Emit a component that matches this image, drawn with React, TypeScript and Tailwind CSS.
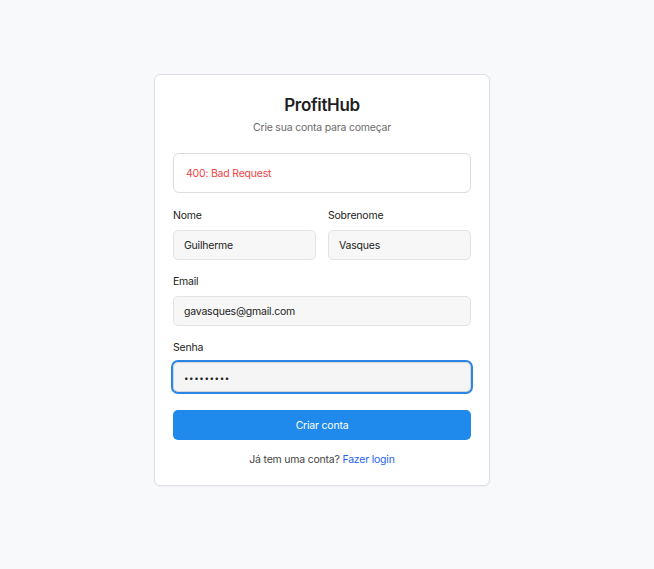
export default function App() {
  const font = { fontFamily: "Inter, 'Noto Sans', sans-serif" };
  const label = "block pt-[1px] leading-4 text-[#222]";
  const field = "mt-[6px] flex h-[30px] items-center rounded-[5px] border border-[#e3e3e5] bg-[#f7f7f7] px-[10px] pt-[2px] text-[#222]";
  return (
    <div className="min-h-[569px] bg-[#f8f9fb] pt-[74px] pl-[154px]" style={font}>
      <div className="w-[336px] rounded-[6px] border border-[#dedfe3] bg-white px-[18px] pt-[18px] pb-[17px] text-[10.5px] tracking-[-0.02em] shadow-[0_1px_2px_rgba(0,0,0,0.04)]">
        <h1 className="text-center text-[17px] leading-6 font-semibold tracking-[-0.02em] text-[#1f1f1f]">ProfitHub</h1>
        <p className="mt-[3px] text-center leading-4 text-[#6b6b6b]">Crie sua conta para começar</p>

        <div className="mt-[17px] flex h-10 items-center rounded-[6px] border border-[#dcdde0] px-3 pt-[2px] text-[#ef4444]">
          400: Bad Request
        </div>

        <div className="mt-[14px] grid grid-cols-2 gap-3">
          <div>
            <label className={label}>Nome</label>
            <div className={field}>Guilherme</div>
          </div>
          <div>
            <label className={label}>Sobrenome</label>
            <div className={field}>Vasques</div>
          </div>
        </div>

        <label className={"mt-[13px] " + label}>Email</label>
        <div className={field}>gavasques@gmail.com</div>

        <label className={"mt-[13px] " + label}>Senha</label>
        <div className="mt-[6px] flex h-[30px] items-center rounded-[5px] border border-[#d6d6d8] bg-[#f5f5f5] px-[10px] pt-[1px] text-[8px] tracking-[0.6px] text-[#222] outline-2 outline-offset-0 outline-[#2b86e5]">
          •••••••••
        </div>

        <button className="mt-[18px] h-[30px] w-full rounded-[5px] bg-[#1f8aeb] pt-[2px] text-white">Criar conta</button>

        <p className="mt-[11px] pt-[1px] text-center leading-4 text-[#444]">
          Já tem uma conta? <span className="text-[#2563eb]">Fazer login</span>
        </p>
      </div>
    </div>
  );
}
